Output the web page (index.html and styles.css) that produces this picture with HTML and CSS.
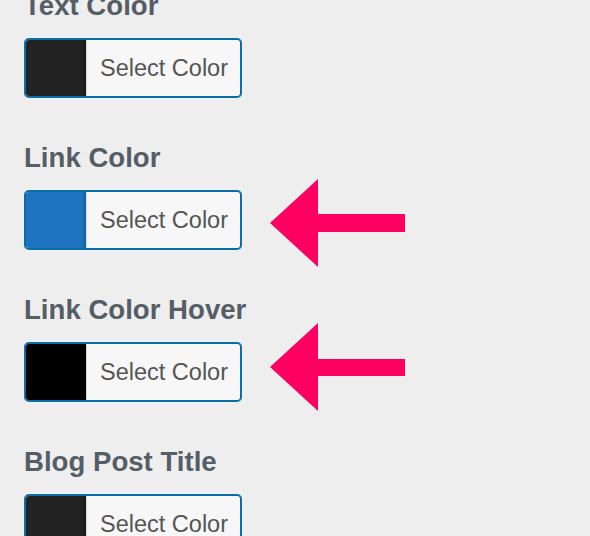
FILE: index.html
```html
<!DOCTYPE html>
<html lang="en">
<head>
    <meta charset="UTF-8">
    <title>Colors</title>

    <link rel="stylesheet" href="styles.css">
</head>
<body>

<div class="panel">

    <div class="field">
        <h2>Text Color</h2>
        <div class="row">
            <button class="color-btn">
                <span class="swatch swatch-dark"></span>
                <span class="label">Select Color</span>
            </button>
        </div>
    </div>

    <div class="field">
        <h2>Link Color</h2>
        <div class="row">
            <button class="color-btn">
                <span class="swatch swatch-blue"></span>
                <span class="label">Select Color</span>
            </button>
            <svg class="arrow arrow-up" width="135" height="88" viewBox="0 0 135 88">
                <polygon points="0,44 48,0 48,35 135,35 135,53 48,53 48,88" fill="#ff0062"/>
            </svg>
        </div>
    </div>

    <div class="field">
        <h2>Link Color Hover</h2>
        <div class="row">
            <button class="color-btn">
                <span class="swatch swatch-black"></span>
                <span class="label">Select Color</span>
            </button>
            <svg class="arrow arrow-down" width="135" height="88" viewBox="0 0 135 88">
                <polygon points="0,44 48,0 48,36 135,36 135,53 48,53 48,88" fill="#ff0062"/>
            </svg>
        </div>
    </div>

    <div class="field">
        <h2>Blog Post Title</h2>
        <div class="row">
            <button class="color-btn">
                <span class="swatch swatch-dark"></span>
                <span class="label">Select Color</span>
            </button>
        </div>
    </div>

</div>

</body>
</html>
```

FILE: styles.css
```css
* {
    margin: 0;
    padding: 0;
    box-sizing: border-box;
}

html,
body {
    height: 100%;
    overflow: hidden;
}

body {
    background: #eeeeee;
    font-family: "Liberation Sans", Arial, sans-serif;
}

.panel {
    margin-top: -10px;
    padding-left: 24px;
}

.field {
    margin-bottom: 44px;
}

.field h2 {
    margin-bottom: 16px;
    font-size: 27.6px;
    line-height: 32px;
    font-weight: bold;
    color: #555d66;
}

.row {
    display: flex;
    align-items: flex-start;
}

.color-btn {
    display: flex;
    width: 218px;
    height: 60px;
    border: 2px solid #0a6fa4;
    border-radius: 5px;
    overflow: hidden;
    background: #f7f7f7;
    font-family: inherit;
    cursor: pointer;
}

.color-btn .swatch {
    width: 60px;
    height: 100%;
    box-shadow: inset -3px 0 0 rgba(0, 0, 0, 0.12);
}

.swatch-dark {
    background: #222222;
}

.swatch-blue {
    background: #1e73be;
}

.swatch-black {
    background: #000000;
}

.color-btn .label {
    flex: 1;
    display: flex;
    align-items: center;
    padding-left: 13px;
    border-left: 1px solid #d8d8d8;
    font-size: 23.5px;
    color: #555555;
}

.arrow {
    flex-shrink: 0;
    margin-left: 28px;
}

.arrow-up {
    margin-top: -11px;
    margin-bottom: -17px;
}

.arrow-down {
    margin-top: -19px;
    margin-bottom: -9px;
}
```
